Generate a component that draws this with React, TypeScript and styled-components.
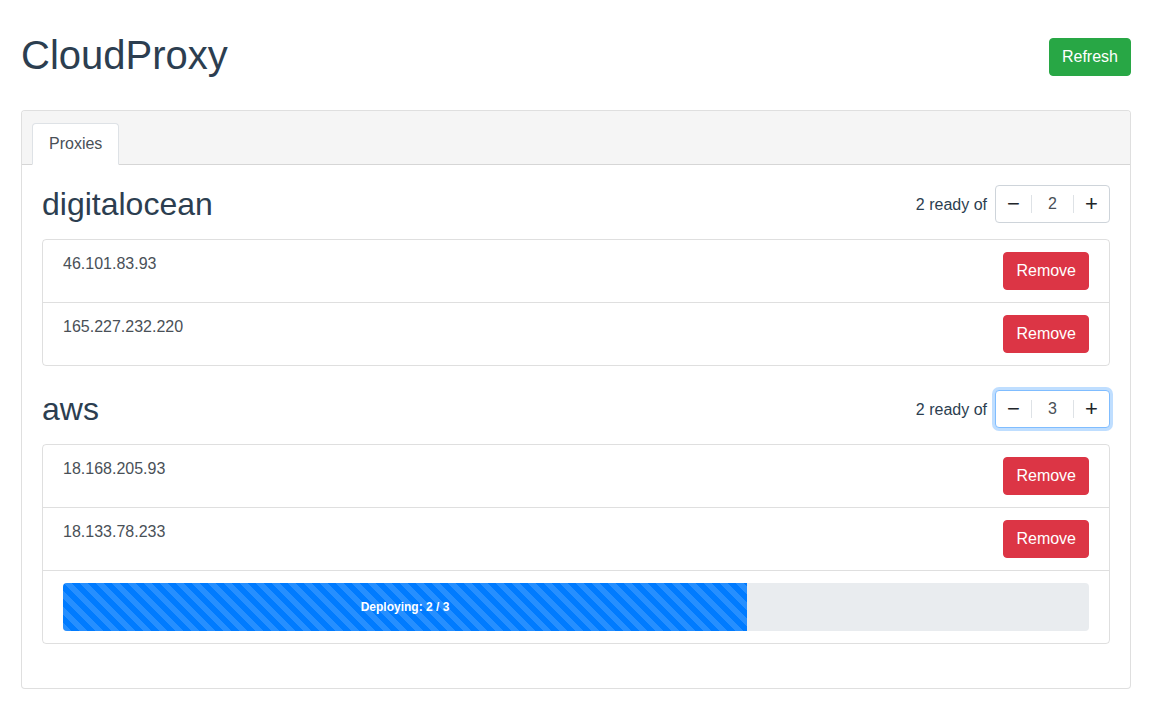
import React from "react";
import styled, { createGlobalStyle, css } from "styled-components";

type Provider = {
  name: string;
  ready: number;
  target: number;
  focused?: boolean;
  ips: string[];
  deploying?: { done: number; total: number };
};

const providers: Provider[] = [
  {
    name: "digitalocean",
    ready: 2,
    target: 2,
    ips: ["46.101.83.93", "165.227.232.220"],
  },
  {
    name: "aws",
    ready: 2,
    target: 3,
    focused: true,
    ips: ["18.168.205.93", "18.133.78.233"],
    deploying: { done: 2, total: 3 },
  },
];

export default function App() {
  return (
    <>
      <GlobalStyle />
      <Page>
        <Header>
          <Title>CloudProxy</Title>
          <Button $variant="success">Refresh</Button>
        </Header>

        <Card>
          <CardHeader>
            <Tabs>
              <Tab $active>Proxies</Tab>
            </Tabs>
          </CardHeader>
          <CardBody>
            {providers.map((p) => (
              <Section key={p.name}>
                <SectionHead>
                  <ProviderName>{p.name}</ProviderName>
                  <Counter>
                    <ReadyText>{p.ready} ready of</ReadyText>
                    <Stepper $focused={p.focused}>
                      <StepButton>−</StepButton>
                      <StepValue>{p.target}</StepValue>
                      <StepButton>+</StepButton>
                    </Stepper>
                  </Counter>
                </SectionHead>
                <List>
                  {p.ips.map((ip) => (
                    <Item key={ip}>
                      <span>{ip}</span>
                      <Button $variant="danger">Remove</Button>
                    </Item>
                  ))}
                  {p.deploying && (
                    <Item>
                      <Progress>
                        <ProgressBar
                          style={{
                            width: `${(p.deploying.done / p.deploying.total) * 100}%`,
                          }}
                        >
                          Deploying: {p.deploying.done} / {p.deploying.total}
                        </ProgressBar>
                      </Progress>
                    </Item>
                  )}
                </List>
              </Section>
            ))}
          </CardBody>
        </Card>
      </Page>
    </>
  );
}

const GlobalStyle = createGlobalStyle`
  * { box-sizing: border-box; }
  body {
    margin: 0;
    background: #fff;
    font-family: "Liberation Sans", Arial, sans-serif;
    font-size: 16px;
    line-height: 1.5;
    color: #2c3e50;
  }
`;

const Page = styled.div`
  padding: 31px 21px 30px;
`;

const Header = styled.div`
  display: flex;
  align-items: center;
  justify-content: space-between;
  margin-bottom: 31px;
`;

const Title = styled.h1`
  margin: 0;
  font-size: 40px;
  font-weight: 400;
  line-height: 48px;
  color: #2c3e50;
`;

const Button = styled.button<{ $variant: "success" | "danger" }>`
  font-family: inherit;
  font-size: 16px;
  line-height: 24px;
  padding: 6px 12px;
  border: 1px solid transparent;
  border-radius: 4px;
  color: #fff;
  cursor: pointer;
  ${({ $variant }) =>
    $variant === "success"
      ? css`
          background: #28a745;
          border-color: #28a745;
          margin-top: 4px;
        `
      : css`
          background: #dc3545;
          border-color: #dc3545;
        `}
`;

const Card = styled.div`
  border: 1px solid rgba(0, 0, 0, 0.125);
  border-radius: 4px;
  background: #fff;
`;

const CardHeader = styled.div`
  background: #f5f5f5;
  border-bottom: 1px solid rgba(0, 0, 0, 0.125);
  padding: 12px 20px 0;
  border-radius: 3px 3px 0 0;
`;

const Tabs = styled.div`
  display: flex;
  margin: 0 -10px -1px -10px;
`;

const Tab = styled.div<{ $active?: boolean }>`
  padding: 8px 16px;
  border: 1px solid transparent;
  border-radius: 4px 4px 0 0;
  color: #495057;
  ${({ $active }) =>
    $active &&
    css`
      background: #fff;
      border-color: #dee2e6 #dee2e6 #fff;
    `}
`;

const CardBody = styled.div`
  padding: 20px;
`;

const Section = styled.section`
  margin-bottom: 24px;
`;

const SectionHead = styled.div`
  display: flex;
  align-items: center;
  justify-content: space-between;
  margin-bottom: 16px;
`;

const ProviderName = styled.h2`
  margin: 0;
  font-size: 32px;
  font-weight: 400;
  line-height: 38px;
  color: #2c3e50;
`;

const Counter = styled.div`
  display: flex;
  align-items: center;
  gap: 8px;
  color: #2c3e50;
`;

const ReadyText = styled.span`
  padding-top: 2px;
`;

const Stepper = styled.div<{ $focused?: boolean }>`
  display: flex;
  align-items: center;
  height: 38px;
  border: 1px solid #ced4da;
  border-radius: 4px;
  background: #fff;
  ${({ $focused }) =>
    $focused &&
    css`
      border-color: #80bdff;
      box-shadow: 0 0 0 3px rgba(0, 123, 255, 0.25);
    `}
`;

const StepButton = styled.div`
  width: 35px;
  text-align: center;
  font-size: 22px;
  line-height: 24px;
  color: #212529;
`;

const StepValue = styled.div`
  width: 43px;
  height: 18px;
  display: flex;
  align-items: center;
  justify-content: center;
  color: #495057;
  border-left: 1px solid #dee2e6;
  border-right: 1px solid #dee2e6;
`;

const List = styled.div`
  display: flex;
  flex-direction: column;
  border: 1px solid rgba(0, 0, 0, 0.125);
  border-radius: 4px;
`;

const Item = styled.div`
  display: flex;
  align-items: flex-start;
  justify-content: space-between;
  padding: 12px 20px;
  color: #495057;
  & + & {
    border-top: 1px solid rgba(0, 0, 0, 0.125);
  }
`;

const Progress = styled.div`
  flex: 1;
  display: flex;
  height: 48px;
  background: #e9ecef;
  border-radius: 4px;
  overflow: hidden;
`;

const ProgressBar = styled.div`
  display: flex;
  align-items: center;
  justify-content: center;
  background-color: #007bff;
  background-image: linear-gradient(
    45deg,
    rgba(255, 255, 255, 0.15) 25%,
    transparent 25%,
    transparent 50%,
    rgba(255, 255, 255, 0.15) 50%,
    rgba(255, 255, 255, 0.15) 75%,
    transparent 75%,
    transparent
  );
  background-size: 16px 16px;
  color: #fff;
  font-size: 12px;
  font-weight: 700;
  white-space: nowrap;
`;
